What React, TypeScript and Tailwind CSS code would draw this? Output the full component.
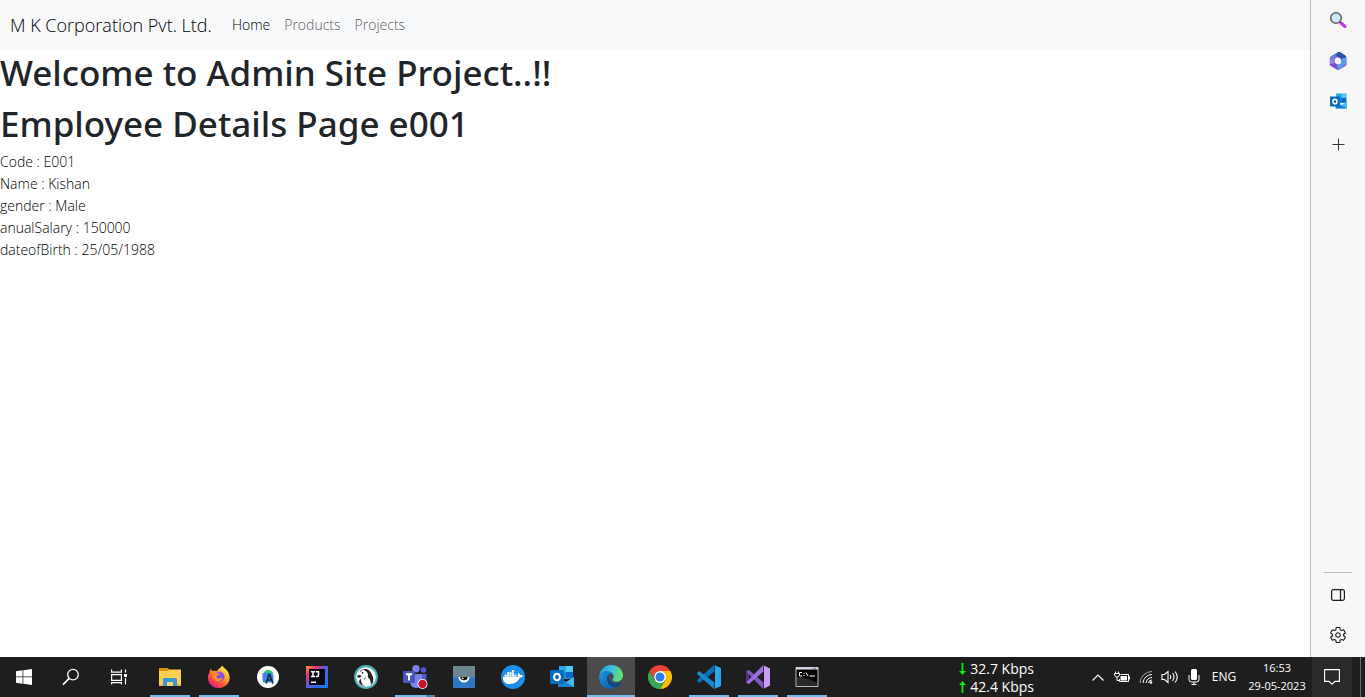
import type { ReactNode } from "react";
import { FaDocker } from "react-icons/fa";
import { IoSettingsOutline } from "react-icons/io5";

type Task = {
  label: string;
  icon: ReactNode;
  state?: "running" | "active" | "grouped";
};

const employee = [
  ["Code", "E001"],
  ["Name", "Kishan"],
  ["gender", "Male"],
  ["anualSalary", "150000"],
  ["dateofBirth", "25/05/1988"],
];

function StartIcon() {
  return (
    <svg viewBox="0 0 16 16" className="size-4" fill="#fff">
      <path d="M0 2.3 6.6 1.3V7.6H0ZM7.3 1.2 16 0V7.6H7.3ZM0 8.3H6.6V14.7L0 13.7ZM7.3 8.3H16V16L7.3 14.8Z" />
    </svg>
  );
}

function SearchIcon() {
  return (
    <svg viewBox="0 0 18 18" className="size-[18px]" fill="none" stroke="#fff" strokeWidth="1.3">
      <circle cx="11" cy="6.6" r="5.3" />
      <path d="M7.2 10.4 1 16.6" strokeWidth="1.6" />
    </svg>
  );
}

function TaskViewIcon() {
  return (
    <svg viewBox="0 0 18 16" className="h-4 w-[18px]" fill="none" stroke="#fff" strokeWidth="1.2">
      <path d="M1.6 5.6h9.8v5.8H1.6ZM1.6 .5v2.6h9.8V.5M1.6 15.5v-1.9h9.8v1.9M15.5 .5v3M15.5 9v6.500" />
      <path d="M14 5h3v3h-3Z" fill="#fff" stroke="none" />
    </svg>
  );
}

function ExplorerIcon() {
  return (
    <svg viewBox="0 0 24 24" className="size-6">
      <path d="M1 3h9l1.500 2H22v5H1Z" fill="#d9950a" />
      <path d="M1 6h9l1-1.500h12V21H1Z" fill="#fccf51" />
      <path d="M1 19.500h22V21H1Z" fill="#e9b233" />
      <path d="M5 21v-6.500Q5 13 6.500 13h11q1.500 0 1.500 1.500V21h-4v-3.500H9V21Z" fill="#3a95dc" />
      <path d="M9 17h6v4H9Z" fill="#f8d66c" />
    </svg>
  );
}

function FirefoxIcon() {
  return (
    <svg viewBox="0 0 24 24" className="size-6">
      <defs>
        <linearGradient id="fxBody" x1=".85" y1=".1" x2=".2" y2=".95">
          <stop offset="0" stopColor="#fff14a" />
          <stop offset=".35" stopColor="#ffa42a" />
          <stop offset=".65" stopColor="#ff5a36" />
          <stop offset="1" stopColor="#e9178a" />
        </linearGradient>
        <linearGradient id="fxGlobe" x1=".7" y1="0" x2=".3" y2="1">
          <stop offset="0" stopColor="#a04df0" />
          <stop offset="1" stopColor="#5a4fe0" />
        </linearGradient>
      </defs>
      <path d="M15 .5c1 2 3.500 3 5 5 4.200 5.500 3.200 12-1.500 15.300-5 3.600-11.700 2.800-15.200-1.600C.5 15.700.3 11 2.500 7.300 2.700 6 3 4.700 4 3.500c.2 1.100.6 1.900 1.300 2.600 1.700-.5 3.300-.3 4.700.2C11 3.600 13.700 3.500 15 .5Z" fill="url(#fxBody)" />
      <circle cx="12.500" cy="11.500" r="5" fill="url(#fxGlobe)" />
      <path d="M5 8c2-1.300 4.200-1 6 .5l2 .3c-.6 1.500-2.400 1.400-3.200 2.400-.7 1 .2 2.300 1.900 2.400 1.500.1 2.700-1 4.300-.6-1.200 3.500-6.500 4.500-9.200 1.200C5.200 12.300 4.500 10 5 8Z" fill="#ff8a28" />
    </svg>
  );
}

function AndroidStudioIcon() {
  return (
    <svg viewBox="0 0 24 24" className="size-6">
      <circle cx="12" cy="12" r="11" fill="#fff" />
      <path d="M7.500 8.500a5.200 5 0 0 1 9.500-1v1Z" fill="#2fc777" />
      <path d="M6.500 8h9.500l1.500 2v7.500H8L6.500 16Z" fill="#3f86ee" />
      <path d="m13 9.500-3 9M13.500 9.500l3.500 9M11 15h5" stroke="#0b3045" strokeWidth="1.700" fill="none" />
      <circle cx="13.200" cy="9.800" r="1.400" fill="#0b3045" />
    </svg>
  );
}

function IntelliJIcon() {
  return (
    <svg viewBox="0 0 24 24" className="size-6">
      <defs>
        <linearGradient id="ij" x1="0" y1="0" x2="1" y2="1">
          <stop offset="0" stopColor="#ff9a20" />
          <stop offset=".25" stopColor="#ef3277" />
          <stop offset=".48" stopColor="#5a58e8" />
          <stop offset="1" stopColor="#087cfa" />
        </linearGradient>
      </defs>
      <path d="M1 1h22v22H1Z" fill="url(#ij)" />
      <path d="M4 4h16v16H4Z" fill="#080611" />
      <path d="M6 6.700h4M8 6.700v5M6 11.500h4M10.800 6.700h2.700v3.600q0 1.200-1.300 1.200h-1.400" stroke="#fff" strokeWidth="1.500" fill="none" />
      <path d="M6 16.500h5V18H6Z" fill="#fff" />
    </svg>
  );
}

function DBeaverIcon() {
  return (
    <svg viewBox="0 0 24 24" className="size-6">
      <circle cx="12" cy="12" r="11.900" fill="#4fb0b5" />
      <circle cx="12" cy="12" r="9.800" fill="#fff" />
      <path d="M8 4.500c4-1.800 8.500.5 9.500 4.500 1.800 2.500 2.300 5.500 1.300 9l-2 1.500c.2-3.500-.6-5.500-3.300-7.500 2-3-1.500-7-5.500-7.500Z" fill="#2b211e" />
      <path d="M3 11c1.500-1.500 3.500-1.200 4.500-.2-.5 1.500-2 2-3.500 1.800Z" fill="#2b211e" />
      <path d="M7 13.500c-.5 2.500.5 5 3 7.500-2-.4-4-1.600-5-3.500.2-1.800 1-3 2-4Z" fill="#2b211e" />
      <circle cx="8.500" cy="7.800" r=".9" fill="#2b211e" />
      <path d="M6 6.500 8.500 5M11.500 12.500 10 14.500" stroke="#2b211e" strokeWidth=".8" />
    </svg>
  );
}

function TeamsIcon() {
  return (
    <svg viewBox="0 0 26 26" className="size-[26px]">
      <circle cx="21.500" cy="6" r="2.800" fill="#5059c9" />
      <circle cx="14" cy="4.700" r="3.700" fill="#7b83eb" />
      <path d="M18 10h6.500v7a4 4 0 0 1-6.500 3Z" fill="#5059c9" />
      <path d="M8 10h12v8a6 6 0 0 1-12 0Z" fill="#7b83eb" />
      <rect x="1" y="7" width="12" height="12" rx="1" fill="#4b53bc" />
      <path d="M4 10.300h6M7 10.300V16.500" stroke="#fff" strokeWidth="1.900" />
      <circle cx="20.500" cy="20" r="5" fill="#fff" />
      <circle cx="20.500" cy="20" r="4.200" fill="#c9102f" />
    </svg>
  );
}

function WatcherIcon() {
  return (
    <svg viewBox="0 0 24 24" className="size-6">
      <path d="M1 1h22v11H1Z" fill="#6d8792" />
      <path d="M1 12h22v11H1Z" fill="#2f78c0" />
      <path d="M6.500 12h11a5.500 5.500 0 0 1-11 0Z" fill="#fff" />
      <path d="M8.300 12h7.400a3.700 3.300 0 0 1-7.400 0Z" fill="#111" />
      <circle cx="10.700" cy="13.300" r=".9" fill="#fff" />
    </svg>
  );
}

function DockerIcon() {
  return (
    <span className="flex size-6 items-center justify-center rounded-full bg-[#1d8eea]">
      <FaDocker className="size-5 text-white" />
    </span>
  );
}

function OutlookIcon({ className }: { className: string }) {
  return (
    <svg viewBox="0 0 24 24" className={className}>
      <path d="M9 1h14v13H9Z" fill="#1490df" />
      <path d="M16 1h7v6h-7Z" fill="#50c9f5" />
      <path d="M9 1h7v6H9Z" fill="#28a8ea" />
      <path d="M16 7h7v6h-7Z" fill="#0f68c4" />
      <path d="m8 12.500 8 4.500 8-5v10H8Z" fill="#45b8f1" />
      <path d="m8 13 16 9H8Z" fill="#1683cf" />
      <rect y="5" width="14" height="14" rx="1" fill="#0a6cbd" />
      <ellipse cx="7" cy="12" rx="2.900" ry="3.300" fill="none" stroke="#fff" strokeWidth="2.100" />
    </svg>
  );
}

function EdgeIcon() {
  return (
    <svg viewBox="0 0 24 24" className="size-6">
      <defs>
        <linearGradient id="edgeTop" x1="0" y1=".4" x2="1" y2=".6">
          <stop offset="0" stopColor="#239fe0" />
          <stop offset=".5" stopColor="#37c5df" />
          <stop offset="1" stopColor="#6be35a" />
        </linearGradient>
        <linearGradient id="edgeLeft" x1="0" y1="0" x2="1" y2="1">
          <stop offset="0" stopColor="#1b96dd" />
          <stop offset="1" stopColor="#0c56a8" />
        </linearGradient>
      </defs>
      <path d="M.2 11C1 4.500 6 0 12 0c7 0 12 4.700 12 10.200 0 4-3 6.500-6.500 6.500-2.700 0-4-1-4-2 0-.8 1.200-1.200 1.200-3C14.700 8.500 11.500 6.500 8 6.500 4 6.500 1.200 8.500.2 11Z" fill="url(#edgeTop)" />
      <path d="M.1 12C.4 8.500 4 6.300 8 6.300c2.500 0 5 1 6 2.700-3-1-6 1-6 5 0 5 4.500 8.500 9 7.500-2 1.600-4 2.500-6 2.500C4.500 24 0 18.500.1 12Z" fill="url(#edgeLeft)" />
      <path d="M8 14c0-2.300 1-3.900 2.500-4.800-.8 1.200-1 2.500-.6 4 .8 3.300 4 5.300 7.600 5.300 2 0 3.500-.7 4.500-1.200.4-.2.700.1.500.5-.9 1.600-2.300 3-4.500 4C12.500 23.500 8 19 8 14Z" fill="#114a8b" />
    </svg>
  );
}

function ChromeIcon() {
  return (
    <svg viewBox="0 0 24 24" className="size-6">
      <path d="M12 6h10.400A12 12 0 0 1 12 24l5.200-9Z" fill="#fbbc05" />
      <path d="M1.600 6A12 12 0 0 0 12 24l5.200-9H6.800Z" fill="#34a853" />
      <path d="M12 0A12 12 0 0 1 22.400 6H12a6 6 0 0 0-5.200 9L1.600 6A12 12 0 0 1 12 0Z" fill="#ea4335" />
      <circle cx="12" cy="12" r="5.900" fill="#fff" />
      <circle cx="12" cy="12" r="4.500" fill="#2f7bea" />
    </svg>
  );
}

function VsCodeIcon() {
  return (
    <svg viewBox="0 0 24 24" className="size-6">
      <path d="M17.500 6.500 3 17.500q-.8.500-1.500 0L.3 16.300q-.6-.8 0-1.500L17 0Z" fill="#0a6fb5" />
      <path d="M17.500 17.500 3 6.500q-.8-.5-1.500 0L.3 7.700q-.6.8 0 1.500L17 24Z" fill="#1389d2" />
      <path d="m17 0 6 2.500q1 .5 1 1.500v16q0 1-1 1.500L17 24q1-.5 1-2V2q0-1.500-1-2Z" fill="#29a8f2" />
    </svg>
  );
}

function VisualStudioIcon() {
  return (
    <svg viewBox="0 0 24 24" className="size-6">
      <path d="M0 6.500 3 5v14l-3-1.500Z" fill="#52308f" />
      <path d="M17.500 17.500 3 5 0 6.500l17 17.300Z" fill="#7e57bd" />
      <path d="M17.500 6.500 3 19 0 17.500 17 .2Z" fill="#9a70d8" />
      <path d="m17 0 7 3.500v17L17 24q1-.5 1-2V2q0-1.500-1-2Z" fill="#c89df5" />
    </svg>
  );
}

function TerminalIcon() {
  return (
    <svg viewBox="0 0 24 20" className="h-5 w-6">
      <path d="M1 .5h22v19H1Z" fill="#050505" stroke="#b9bdc2" />
      <path d="M1 .5h22v2H1Z" fill="#d9dce0" />
      <path d="M18 1.500h1M20 1.500h1" stroke="#466bb0" />
      <path d="M2 10Q14 11 22 16v3H2Z" fill="#292929" />
      <path d="M7 5.500H4.500v3.500H7M9 6v1M9 8v1M11 5.500 13 9M14.500 9H20" stroke="#fff" fill="none" />
    </svg>
  );
}

const tasks: Task[] = [
  { label: "File Explorer", icon: <ExplorerIcon />, state: "running" },
  { label: "Firefox", icon: <FirefoxIcon />, state: "running" },
  { label: "Android Studio", icon: <AndroidStudioIcon /> },
  { label: "IntelliJ IDEA", icon: <IntelliJIcon /> },
  { label: "DBeaver", icon: <DBeaverIcon /> },
  { label: "Microsoft Teams", icon: <TeamsIcon />, state: "grouped" },
  { label: "Watcher", icon: <WatcherIcon /> },
  { label: "Docker Desktop", icon: <DockerIcon /> },
  { label: "Outlook", icon: <OutlookIcon className="size-6" /> },
  { label: "Microsoft Edge", icon: <EdgeIcon />, state: "active" },
  { label: "Google Chrome", icon: <ChromeIcon /> },
  { label: "Visual Studio Code", icon: <VsCodeIcon />, state: "running" },
  { label: "Visual Studio", icon: <VisualStudioIcon />, state: "running" },
  { label: "Command Prompt", icon: <TerminalIcon />, state: "running" },
];

function TaskButton({ label, icon, state }: Task) {
  return (
    <button
      aria-label={label}
      className={`flex w-12 flex-col items-center ${state === "active" ? "bg-[#4b4b4b]" : ""}`}
    >
      <span className="flex flex-1 items-center pt-0.5">{icon}</span>
      {state === "active" && <span className="h-0.5 w-full bg-[#76b9ed]" />}
      {state === "running" && <span className="h-0.5 w-10 bg-[#76b9ed]" />}
      {state === "grouped" && (
        <span className="flex h-0.5 w-10">
          <span className="w-[31px] bg-[#76b9ed]" />
          <span className="flex-1 bg-[#5583a8]" />
        </span>
      )}
      {!state && <span className="h-0.5" />}
    </button>
  );
}

function SystemButton({ label, width, children }: { label: string; width: string; children: ReactNode }) {
  return (
    <button aria-label={label} className={`flex items-center justify-center ${width}`}>
      {children}
    </button>
  );
}

function NavBar() {
  return (
    <nav className="flex h-[50px] items-center bg-[#f8f9fb] pl-2.5 font-light">
      <a href="#" className="mr-5 text-lg text-black">
        M K Corporation Pvt. Ltd.
      </a>
      <div className="flex gap-3.5 text-sm">
        <a href="#home" className="text-black">Home</a>
        <a href="#products" className="text-[#5c5d5e]">Products</a>
        <a href="#projects" className="text-[#5c5d5e]">Projects</a>
      </div>
    </nav>
  );
}

function EdgeSidebar() {
  return (
    <aside className="flex w-[55px] shrink-0 flex-col items-center border-l border-[#bdbdbd] bg-[#f7f7f7] pb-[5px]">
      <button aria-label="Search" className="flex h-10 items-center">
        <svg viewBox="0 0 18 18" className="size-[18px]">
          <path d="m12 12 4 3.500" stroke="#cb2ef0" strokeWidth="3" strokeLinecap="round" />
          <path d="m10 10 2 2" stroke="#555" strokeWidth="1.500" />
          <circle cx="7" cy="7" r="5.300" fill="#cdeafa" stroke="#646464" strokeWidth="1.600" />
        </svg>
      </button>
      <button aria-label="Microsoft 365" className="flex h-[41px] items-center">
        <svg viewBox="0 0 18 18" className="size-[18px]">
          <defs>
            <linearGradient id="m365a" x1="0" y1="0" x2="0" y2="1">
              <stop offset="0" stopColor="#4b6fd8" />
              <stop offset="1" stopColor="#b18be8" />
            </linearGradient>
          </defs>
          <path d="M9 0 1.500 4.500Q.7 5 .7 6v6.500L6 11.500V7l6-4Z" fill="url(#m365a)" />
          <path d="M9 0h2l5.500 3.500q.8.500.8 1.500v8L12 11V7L7 4Z" fill="#2d4fa8" />
          <path d="M.7 12 6 11l4 2 7.300-3v2.500q0 1-.8 1.500L10 17.700q-1 .4-2 0l-6.500-4Q.7 13 .7 12Z" fill="#7850c8" />
          <path d="m12 7 5.300-2v6q0 1.500-1.500 2.500L9 17.800 8 13l4-2Z" fill="#5d9bf0" />
          <path d="m9 5.700 3 1.700v3.400l-3 1.700-3-1.700V7.400Z" fill="#f7f7f7" />
        </svg>
      </button>
      <button aria-label="Outlook" className="flex h-10 items-center">
        <OutlookIcon className="size-[17px]" />
      </button>
      <button aria-label="Customize" className="flex h-[46px] items-center">
        <svg viewBox="0 0 13 13" className="size-[13px]" stroke="#333" strokeWidth="1">
          <path d="M6.500 .5v12M.5 6.500h12" />
        </svg>
      </button>
      <span className="mt-auto h-px w-7 bg-[#bdbdbd]" />
      <button aria-label="Hide sidebar" className="flex h-11 items-center">
        <svg viewBox="0 0 14 12" className="h-3 w-3.5" fill="none" stroke="#1a1a1a" strokeWidth="1.200">
          <rect x=".6" y=".6" width="12.800" height="10.800" rx="1.800" />
          <path d="M9.500 .6v10.800" />
        </svg>
      </button>
      <button aria-label="Settings" className="flex h-[35px] items-center">
        <IoSettingsOutline className="size-[18px] text-[#1a1a1a]" />
      </button>
    </aside>
  );
}

function Tray() {
  return (
    <div className="ml-auto flex items-stretch text-white">
      <div className="mr-[52px] flex flex-col justify-center pt-0.5 text-sm leading-[18px]">
        <div className="flex items-center gap-1">
          <svg viewBox="0 0 7 12" className="h-3 w-[7px]" fill="#0be80b">
            <path d="M2.600 0h1.800v8H7L3.500 12 0 8h2.600Z" />
          </svg>
          32.7 Kbps
        </div>
        <div className="flex items-center gap-1">
          <svg viewBox="0 0 7 12" className="h-3 w-[7px]" fill="#0be80b">
            <path d="M2.600 12h1.800V4H7L3.500 0 0 4h2.600Z" />
          </svg>
          42.4 Kbps
        </div>
      </div>
      <button aria-label="Show hidden icons" className="flex w-6 items-center justify-center">
        <svg viewBox="0 0 12 7" className="h-[7px] w-3" fill="none" stroke="#fff" strokeWidth="1.200">
          <path d="M.5 6.500 6 1l5.500 5.500" />
        </svg>
      </button>
      <button aria-label="Battery" className="flex w-6 items-center justify-center">
        <svg viewBox="0 0 16 13" className="h-[13px] w-4" fill="none" stroke="#fff">
          <path d="M6.500 3.500h8v7h-9V8M15.500 5.500v3" />
          <path d="M6.500 5H13v4.500H6.500Z" fill="#fff" stroke="none" />
          <path d="M1.500 .5v2M4.500 .5v2M.5 2.500h5V4L4 6H2L.5 4ZM3 6v3.500h2" />
        </svg>
      </button>
      <button aria-label="Network" className="flex w-6 items-center justify-center">
        <svg viewBox="0 0 14 14" className="size-3.5" fill="none" stroke="#fff">
          <path d="M1 13A12 12 0 0 1 13 1.500" stroke="#aaa" />
          <path d="M4 13a9 9 0 0 1 9-8.500M7 13a6 6 0 0 1 6-5.500" />
          <path d="M9.500 13A3.500 3.500 0 0 1 13 10" />
          <circle cx="12" cy="12.500" r="1.300" fill="#fff" stroke="none" />
        </svg>
      </button>
      <button aria-label="Volume" className="flex w-6 items-center justify-center">
        <svg viewBox="0 0 18 14" className="h-3.5 w-[18px]" fill="none" stroke="#fff" strokeWidth="1.100">
          <path d="M1 4.500h2.500L7 1.500v11L3.500 9.500H1Z" />
          <path d="M9 5q1.500 2 0 4M11.500 3q3 4 0 8M14 1.500q4.500 5.500 0 11" />
        </svg>
      </button>
      <button aria-label="Microphone" className="flex w-6 items-center justify-center">
        <svg viewBox="0 0 12 16" className="h-4 w-3" fill="none" stroke="#fff">
          <rect x="3" y="0" width="6" height="11" rx="1.500" fill="#fff" stroke="none" />
          <path d="M1 6v4.500Q1 13 3.500 13h5q2.500 0 2.500-2.500V6M6 13v2.500M3.500 15.500h5" />
        </svg>
      </button>
      <button className="w-9 text-xs">ENG</button>
      <button className="flex w-[70px] flex-col items-center justify-center text-[11px] leading-[18px]">
        <span>16:53</span>
        <span>29-05-2023</span>
      </button>
      <button aria-label="Notifications" className="flex w-10 items-center justify-center bg-[#2a2a2a]">
        <svg viewBox="0 0 16 16" className="size-4" fill="none" stroke="#fff" strokeWidth="1.100">
          <path d="M.6 .6h14.800v11.800h-4.400L8 15.200 5 12.400H.6Z" />
        </svg>
      </button>
      <button aria-label="Show desktop" className="flex w-[13px] pl-2">
        <span className="h-full w-px bg-[#6b6b6b]" />
      </button>
    </div>
  );
}

export default function App() {
  return (
    <div className="flex min-h-screen flex-col bg-white font-['Open_Sans','Noto_Sans',sans-serif]">
      <div className="flex flex-1">
        <div className="min-w-0 flex-1">
          <NavBar />
          <main>
            <div className="flex flex-col gap-2 pt-px pb-1.5 font-['Noto_Sans','Open_Sans',sans-serif] text-[35px] leading-[43px] font-medium text-[#212529]">
              <h1>Welcome to Admin Site Project..!!</h1>
              <h1>Employee Details Page e001</h1>
            </div>
            <div className="text-sm leading-[22px] font-light text-black">
              {employee.map(([key, value]) => (
                <p key={key}>
                  {key} : {value}
                </p>
              ))}
            </div>
          </main>
        </div>
        <EdgeSidebar />
      </div>
      <footer className="flex h-10 items-stretch bg-[#1e1e1e]">
        <SystemButton label="Start" width="w-[47px]">
          <StartIcon />
        </SystemButton>
        <SystemButton label="Search" width="w-12">
          <SearchIcon />
        </SystemButton>
        <SystemButton label="Task View" width="w-12">
          <TaskViewIcon />
        </SystemButton>
        <div className="ml-[3px] flex gap-px">
          {tasks.map((task) => (
            <TaskButton key={task.label} {...task} />
          ))}
        </div>
        <Tray />
      </footer>
    </div>
  );
}
